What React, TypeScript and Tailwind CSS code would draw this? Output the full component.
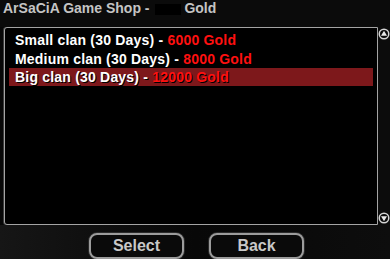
import React, { useState } from 'react';

type ShopItem = {
  id: number;
  name: string;
  price: number;
};

const ITEMS: ShopItem[] = [
  { id: 1, name: 'Small clan (30 Days)', price: 6000 },
  { id: 2, name: 'Medium clan (30 Days)', price: 8000 },
  { id: 3, name: 'Big clan (30 Days)', price: 12000 },
];

const ScrollArrow: React.FC<{ down?: boolean }> = ({ down }) => (
  <svg width="12" height="12" viewBox="0 0 12 12" className={down ? 'rotate-180' : ''}>
    <circle cx="6" cy="6" r="5.5" fill="#d4d4d4" />
    <circle cx="6" cy="6" r="4" fill="#0a0a0a" />
    <path d="M6 2.8 L9 7.8 L3 7.8 Z" fill="#e8e8e8" />
  </svg>
);

const App: React.FC = () => {
  const [selected, setSelected] = useState(3);

  return (
    <div className="w-[390px] h-[259px] overflow-hidden bg-[#070707] flex flex-col font-['Liberation_Sans',Arial,sans-serif] font-bold">
      <header className="h-[27px] shrink-0 pl-[3px] bg-[#0b0b0b] text-[14px] leading-[17px] text-[#c4c4c4] whitespace-pre">
        ArSaCiA Game Shop - <span className="inline-block w-[26px] h-[11px] ml-[2px] mr-[3px] bg-black align-middle" />Gold
      </header>

      <div className="flex h-[198px] shrink-0">
        <main className="w-[374px] ml-[4px] shrink-0 border border-[#a4a4a4] rounded-l-[3px] bg-black pt-[3px] flex flex-col gap-[0.5px] shadow-[-1px_0_0_#3a3a3a]">
          {ITEMS.map((item) => (
            <div
              key={item.id}
              onClick={() => setSelected(item.id)}
              className={`h-[18px] mx-[4px] px-[6px] text-[14px] leading-[18px] tracking-[0.2px] whitespace-nowrap cursor-pointer [text-shadow:1px_1px_0_#000] ${
                selected === item.id ? 'bg-[#7d181b]' : ''
              }`}
            >
              <span className="text-white">{item.name} - </span>
              <span className="text-[#ff1010]">{item.price} Gold</span>
            </div>
          ))}
        </main>
        <aside className="w-[14px] shrink-0 bg-[#0c0c0c] flex flex-col justify-between items-start pt-[1px] pb-[1px]">
          <ScrollArrow />
          <ScrollArrow down />
        </aside>
      </div>

      <footer className="flex-1 flex justify-center gap-[25px] pt-[8px] pl-[3px] bg-gradient-to-r from-[#161616] via-[#080808] to-[#0d0d0d]">
        {['Select', 'Back'].map((label) => (
          <button
            key={label}
            className="w-[95px] h-[26px] rounded-[8px] border-2 border-[#9c9c9c] bg-[#0a0a0a] text-[#c8c8c8] text-[16px] leading-[18px] font-bold flex items-center justify-center shadow-[0_0_0_1px_#2a2a2a]"
          >
            {label}
          </button>
        ))}
      </footer>
    </div>
  );
};

export default App;
